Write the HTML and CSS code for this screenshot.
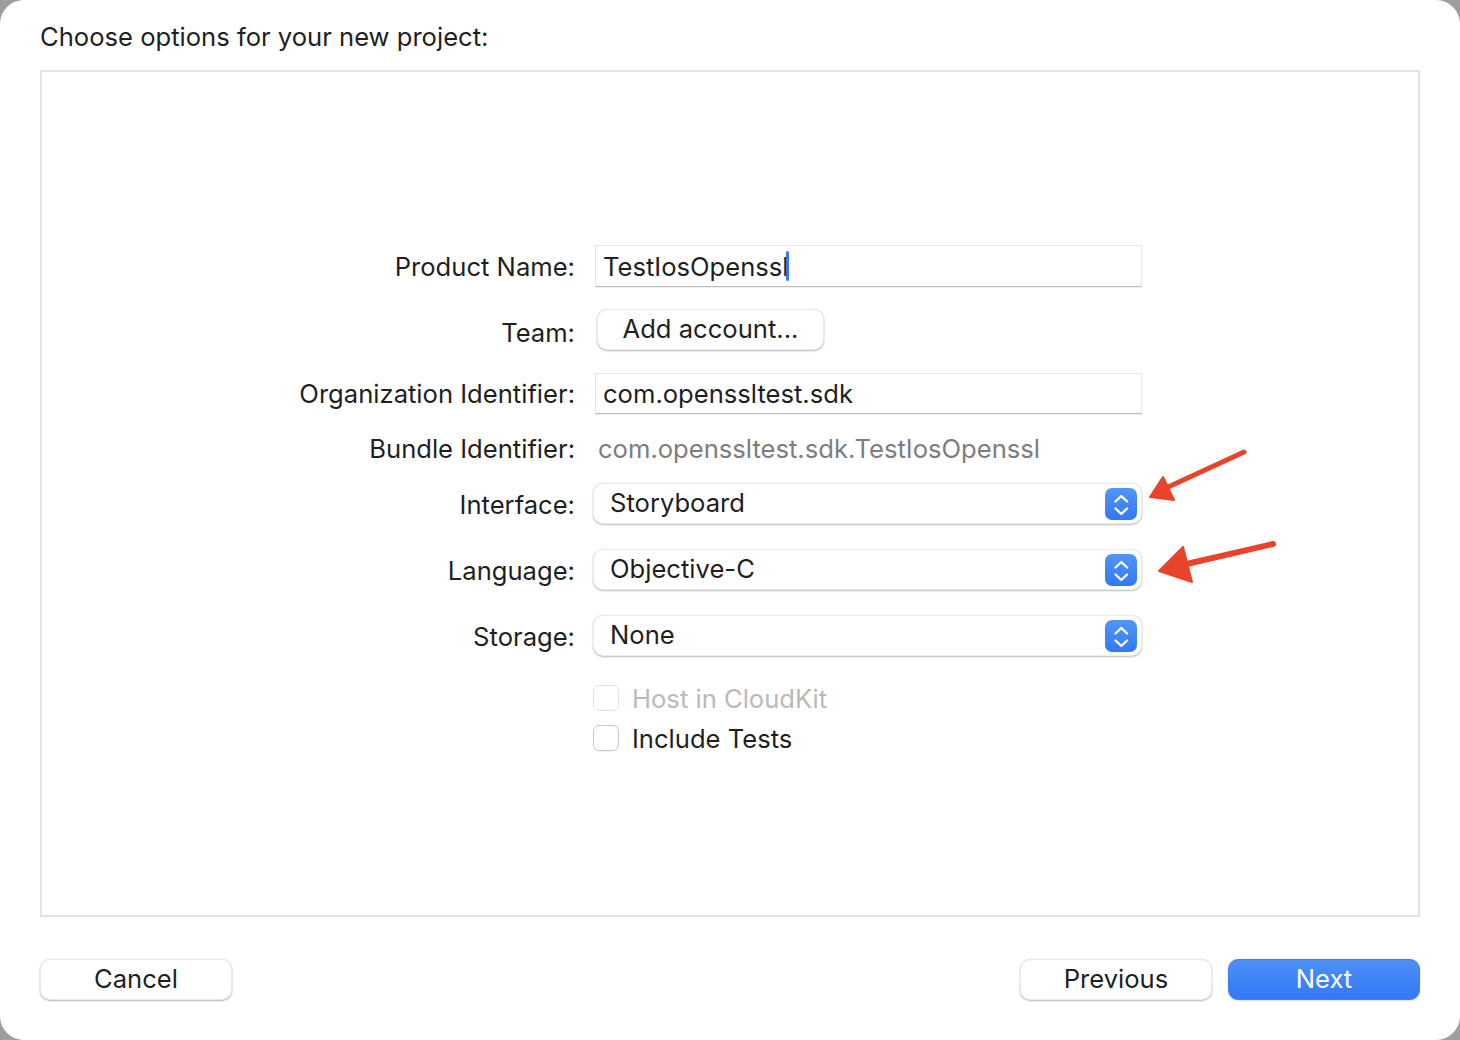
FILE: index.html
```html
<!DOCTYPE html>
<html lang="en">
<head>
<meta charset="utf-8">
<title>Choose options for your new project</title>
<link rel="stylesheet" href="styles.css">
</head>
<body>
<div class="window">
  <h1 class="title">Choose options for your new project:</h1>
  <div class="panel">
    <div class="form">
      <div class="row row-product">
        <div class="label">Product Name:</div>
        <div class="field"><span class="field-text">TestIosOpenssl</span><span class="caret"></span></div>
      </div>
      <div class="row row-team">
        <div class="label label-team">Team:</div>
        <div class="button team-button">Add account...</div>
      </div>
      <div class="row row-org">
        <div class="label">Organization Identifier:</div>
        <div class="field"><span class="field-text">com.openssltest.sdk</span></div>
      </div>
      <div class="row row-bundle">
        <div class="label">Bundle Identifier:</div>
        <div class="bundle-value">com.openssltest.sdk.TestIosOpenssl</div>
      </div>
      <div class="row row-popup row-interface">
        <div class="label label-popup">Interface:</div>
        <div class="popup"><span class="popup-text">Storyboard</span>
          <span class="stepper"><svg width="32" height="32" viewBox="0 0 32 32"><path d="M10.5 13.5 L16.3 8 L22.1 13.5 M10.5 20.5 L16.3 26 L22.1 20.5" fill="none" stroke="#fff" stroke-width="2.4" stroke-linecap="round" stroke-linejoin="round"/></svg></span>
        </div>
      </div>
      <div class="row row-popup">
        <div class="label label-popup">Language:</div>
        <div class="popup"><span class="popup-text">Objective-C</span>
          <span class="stepper"><svg width="32" height="32" viewBox="0 0 32 32"><path d="M10.5 13.5 L16.3 8 L22.1 13.5 M10.5 20.5 L16.3 26 L22.1 20.5" fill="none" stroke="#fff" stroke-width="2.4" stroke-linecap="round" stroke-linejoin="round"/></svg></span>
        </div>
      </div>
      <div class="row row-popup">
        <div class="label label-popup">Storage:</div>
        <div class="popup"><span class="popup-text">None</span>
          <span class="stepper"><svg width="32" height="32" viewBox="0 0 32 32"><path d="M10.5 13.5 L16.3 8 L22.1 13.5 M10.5 20.5 L16.3 26 L22.1 20.5" fill="none" stroke="#fff" stroke-width="2.4" stroke-linecap="round" stroke-linejoin="round"/></svg></span>
        </div>
      </div>
      <div class="row row-check row-check-first">
        <div class="label"></div>
        <div class="check disabled"><span class="box"></span><span class="check-text">Host in CloudKit</span></div>
      </div>
      <div class="row row-check">
        <div class="label"></div>
        <div class="check"><span class="box"></span><span class="check-text">Include Tests</span></div>
      </div>
    </div>
  </div>
  <div class="footer">
    <div class="button footer-button">Cancel</div>
    <div class="footer-right">
      <div class="button footer-button">Previous</div>
      <div class="button footer-button primary">Next</div>
    </div>
  </div>
  <svg class="arrows" width="1460" height="1040" viewBox="0 0 1460 1040">
    <g fill="#e8432b" stroke="#e8432b" stroke-linecap="round" stroke-linejoin="round">
      <line x1="1244" y1="452" x2="1166" y2="488" stroke-width="5"/>
      <polygon points="1150,497 1163,477 1174,500" stroke-width="2"/>
      <line x1="1273" y1="544" x2="1178" y2="566" stroke-width="6"/>
      <polygon points="1159,571 1183,547 1192,582" stroke-width="2"/>
    </g>
  </svg>
</div>
</body>
</html>
```

FILE: styles.css
```css
* { box-sizing: border-box; }
html, body {
  margin: 0;
  padding: 0;
  width: 1460px;
  height: 1040px;
  background: #9e9e9e;
  overflow: hidden;
}
body {
  font-family: Inter, "Liberation Sans", Arial, sans-serif;
  color: #222;
  font-size: 25.6px;
}
.window {
  position: relative;
  width: 1460px;
  height: 1040px;
  background: #ffffff;
  border-radius: 24px;
  padding: 0 40px;
  display: flex;
  flex-direction: column;
}
.title {
  margin: 22px 0 0;
  height: 30px;
  line-height: 30px;
  font-size: 25.6px;
  font-weight: 400;
  color: #1f1f1f;
}
.panel {
  margin-top: 18px;
  height: 847px;
  border: 2px solid #e3e3e3;
  padding-top: 173px;
}
.form {
  display: flex;
  flex-direction: column;
}
.row {
  display: flex;
  align-items: center;
}
.label {
  width: 533px;
  text-align: right;
  font-size: 25.6px;
  color: #1f1f1f;
  flex: none;
  margin-right: 20px;
}
.row-product { height: 42px; }
.row-team { height: 41px; margin-top: 22px; }
.label-team { padding-top: 5px; }
.row-org { height: 41px; margin-top: 23px; }
.row-bundle { height: 30px; margin-top: 19px; }
.row-popup { height: 41px; margin-top: 25px; }
.row-interface { margin-top: 20px; }
.label-popup { padding-top: 1px; }
.row-check { height: 26px; margin-top: 14px; }
.row-check-first { margin-top: 29px; }

.field {
  width: 547px;
  height: 42px;
  background: #fff;
  border: 1px solid #e6e6e6;
  border-bottom: 1px solid #bdbdbd;
  box-shadow: 0 1px 0 rgba(0,0,0,0.06);
  display: flex;
  align-items: center;
  padding-left: 7px;
}
.row-org .field { height: 41px; }
.field-text {
  font-size: 25.6px;
  color: #1f1f1f;
}
.caret {
  display: inline-block;
  width: 3px;
  height: 30px;
  border-radius: 2px;
  background: #3478f6;
  margin-left: -3px;
}
.button {
  background: #fff;
  border-radius: 10px;
  border: 1px solid rgba(0,0,0,0.08);
  box-shadow: 0 1px 2px rgba(0,0,0,0.28), 0 0 1px rgba(0,0,0,0.12);
  display: flex;
  align-items: center;
  justify-content: center;
  font-size: 25.6px;
  color: #1f1f1f;
}
.team-button {
  width: 227px;
  height: 41px;
  margin-left: 2px;
  padding-bottom: 2px;
}
.bundle-value {
  font-size: 25.6px;
  color: #7d7d7d;
  margin-left: 3px;
}
.popup {
  width: 549px;
  height: 41px;
  margin-left: -2px;
  background: #fff;
  border-radius: 10px;
  border: 1px solid rgba(0,0,0,0.07);
  box-shadow: 0 1px 2px rgba(0,0,0,0.26), 0 0 1px rgba(0,0,0,0.12);
  display: flex;
  align-items: center;
  justify-content: space-between;
  padding: 0 4px 0 16px;
}
.popup-text {
  font-size: 25.6px;
  color: #1f1f1f;
  padding-bottom: 2px;
}
.stepper {
  width: 32px;
  height: 32px;
  border-radius: 7px;
  background: linear-gradient(#5196f8, #3377f5);
  display: flex;
}
.check {
  display: flex;
  align-items: center;
  margin-left: -2px;
}
.box {
  width: 26px;
  height: 26px;
  border-radius: 6px;
  background: #fff;
  border: 1px solid #c9c9c9;
  box-shadow: 0 1px 1px rgba(0,0,0,0.06);
  margin-right: 13px;
}
.check-text {
  font-size: 25.6px;
  color: #1f1f1f;
}
.check.disabled .box { border-color: #e3e3e3; box-shadow: none; }
.check.disabled .check-text { color: #b9b9b9; }

.footer {
  margin-top: 42px;
  display: flex;
  justify-content: space-between;
  align-items: center;
}
.footer-right {
  display: flex;
  gap: 16px;
}
.footer-button {
  width: 192px;
  height: 41px;
  padding-bottom: 3px;
}
.footer-button.primary {
  background: linear-gradient(#4c91f8, #3478f6);
  color: #fff;
  border-color: #3b7ef6;
  box-shadow: 0 1px 2px rgba(0,0,0,0.15);
}
.arrows {
  position: absolute;
  left: 0;
  top: 0;
  pointer-events: none;
}
```
